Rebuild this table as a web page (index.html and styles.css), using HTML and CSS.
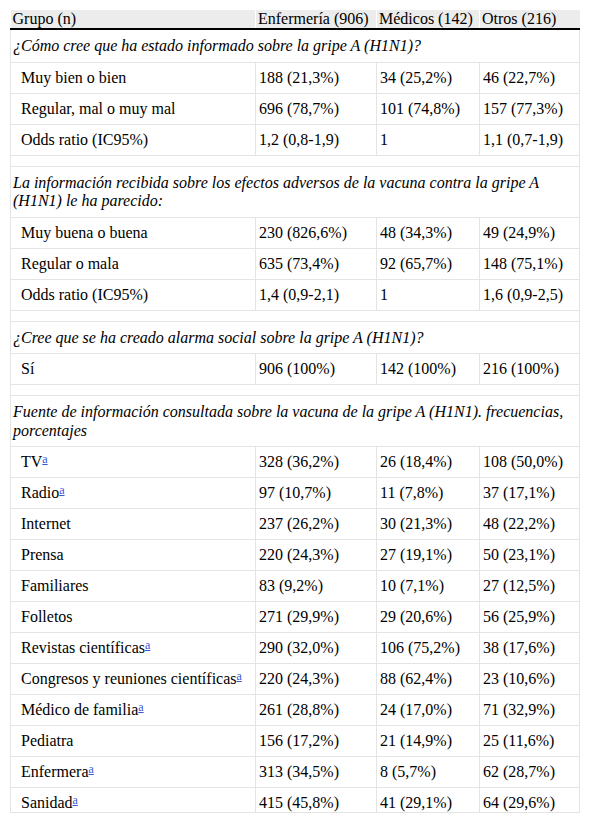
FILE: index.html
```html
<!DOCTYPE html>
<html lang="es">
<head>
<meta charset="utf-8">
<link rel="stylesheet" href="styles.css">
</head>
<body>
<div class="wrap">
<table class="tbl">
<colgroup><col class="c1"><col class="c2"><col class="c3"><col class="c4"></colgroup>
<thead>
<tr><th>Grupo (n)</th><th>Enfermería (906)</th><th>Médicos (142)</th><th>Otros (216)</th></tr>
</thead>
<tbody>
<tr class="sec"><td colspan="4">¿Cómo cree que ha estado informado sobre la gripe A (H1N1)?</td></tr>
<tr><td>Muy bien o bien</td><td>188 (21,3%)</td><td>34 (25,2%)</td><td>46 (22,7%)</td></tr>
<tr><td>Regular, mal o muy mal</td><td>696 (78,7%)</td><td>101 (74,8%)</td><td>157 (77,3%)</td></tr>
<tr><td>Odds ratio (IC95%)</td><td>1,2 (0,8-1,9)</td><td>1</td><td>1,1 (0,7-1,9)</td></tr>
<tr class="gap"><td colspan="4"></td></tr>
<tr class="sec"><td colspan="4">La información recibida sobre los efectos adversos de la vacuna contra la gripe A (H1N1) le ha parecido:</td></tr>
<tr><td>Muy buena o buena</td><td>230 (826,6%)</td><td>48 (34,3%)</td><td>49 (24,9%)</td></tr>
<tr><td>Regular o mala</td><td>635 (73,4%)</td><td>92 (65,7%)</td><td>148 (75,1%)</td></tr>
<tr><td>Odds ratio (IC95%)</td><td>1,4 (0,9-2,1)</td><td>1</td><td>1,6 (0,9-2,5)</td></tr>
<tr class="gap"><td colspan="4"></td></tr>
<tr class="sec"><td colspan="4">¿Cree que se ha creado alarma social sobre la gripe A (H1N1)?</td></tr>
<tr><td>Sí</td><td>906 (100%)</td><td>142 (100%)</td><td>216 (100%)</td></tr>
<tr class="gap"><td colspan="4"></td></tr>
<tr class="sec"><td colspan="4">Fuente de información consultada sobre la vacuna de la gripe A (H1N1). frecuencias, porcentajes</td></tr>
<tr><td>TV<a class="fn" href="#">a</a></td><td>328 (36,2%)</td><td>26 (18,4%)</td><td>108 (50,0%)</td></tr>
<tr><td>Radio<a class="fn" href="#">a</a></td><td>97 (10,7%)</td><td>11 (7,8%)</td><td>37 (17,1%)</td></tr>
<tr><td>Internet</td><td>237 (26,2%)</td><td>30 (21,3%)</td><td>48 (22,2%)</td></tr>
<tr><td>Prensa</td><td>220 (24,3%)</td><td>27 (19,1%)</td><td>50 (23,1%)</td></tr>
<tr><td>Familiares</td><td>83 (9,2%)</td><td>10 (7,1%)</td><td>27 (12,5%)</td></tr>
<tr><td>Folletos</td><td>271 (29,9%)</td><td>29 (20,6%)</td><td>56 (25,9%)</td></tr>
<tr><td>Revistas científicas<a class="fn" href="#">a</a></td><td>290 (32,0%)</td><td>106 (75,2%)</td><td>38 (17,6%)</td></tr>
<tr><td>Congresos y reuniones científicas<a class="fn" href="#">a</a></td><td>220 (24,3%)</td><td>88 (62,4%)</td><td>23 (10,6%)</td></tr>
<tr><td>Médico de familia<a class="fn" href="#">a</a></td><td>261 (28,8%)</td><td>24 (17,0%)</td><td>71 (32,9%)</td></tr>
<tr><td>Pediatra</td><td>156 (17,2%)</td><td>21 (14,9%)</td><td>25 (11,6%)</td></tr>
<tr><td>Enfermera<a class="fn" href="#">a</a></td><td>313 (34,5%)</td><td>8 (5,7%)</td><td>62 (28,7%)</td></tr>
<tr class="last"><td>Sanidad<a class="fn" href="#">a</a></td><td>415 (45,8%)</td><td>41 (29,1%)</td><td>64 (29,6%)</td></tr>
</tbody>
</table>
</div>
</body>
</html>
```

FILE: styles.css
```css
html, body {
  margin: 0;
  padding: 0;
  background: #fff;
}
.wrap {
  padding: 10px 0 0 10px;
}
.tbl {
  border-collapse: collapse;
  width: 569px;
  table-layout: fixed;
  font-family: "Liberation Serif", "Times New Roman", serif;
  font-size: 16px;
  line-height: 18px;
  color: #000;
}
.c1 { width: 245px; }
.c2 { width: 121px; }
.c3 { width: 103px; }
.c4 { width: 100px; }
.tbl th {
  background: #ececec;
  font-weight: normal;
  text-align: left;
  padding: 0 2px;
  border-bottom: 2px solid #000;
  border-left: 1px solid #fff;
  white-space: nowrap;
}
.tbl th:first-child { border-left: none; }
.tbl td {
  border: 1px solid #e4e4e4;
  padding: 6px 3px;
  vertical-align: top;
}
.tbl td:first-child {
  padding-left: 10px;
}
.tbl tr.sec td {
  font-style: italic;
  line-height: 18.5px;
  padding: 7px 2px 6px 2px;
}
.tbl tr.gap td {
  padding: 0;
  height: 10px;
}
.tbl tr.last td {
  padding-bottom: 0;
}
.fn {
  color: #3a56d4;
  font-size: 12px;
  vertical-align: top;
  line-height: 13px;
  text-decoration: underline;
}
```
